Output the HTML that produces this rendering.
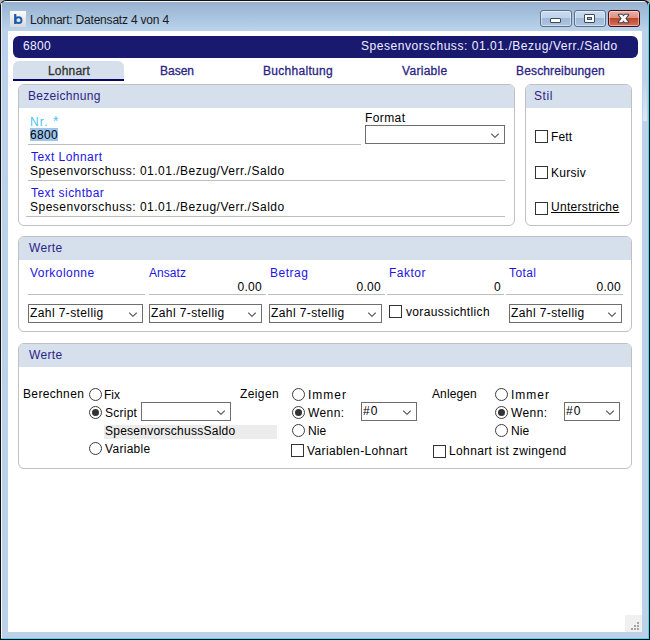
<!DOCTYPE html>
<html><head><meta charset="utf-8">
<style>
html,body{margin:0;padding:0;width:650px;height:640px;overflow:hidden;background:#b4b4b4;}
*{box-sizing:border-box;}
body{font-family:"Liberation Sans",sans-serif;font-size:12px;line-height:14px;position:relative;}
.a{position:absolute;}
.t{position:absolute;white-space:nowrap;line-height:14px;font-size:12px;color:#000;letter-spacing:0.35px;}
#win{position:absolute;left:0;top:0;width:650px;height:640px;background:#111;border-radius:6px 6px 0 0;}
#frame{position:absolute;left:1px;top:1px;width:647px;height:637px;border-radius:5px 5px 0 0;
  background:linear-gradient(#f2f6fa 0,#f2f6fa 1px,#97b2d0 1px,#b9d3eb 29px,#bcd2ea 30px,#bcd2ea 100%);}
#cyanR{position:absolute;left:648px;top:3px;width:1px;height:636px;background:#3fdcf8;}
#cyanB{position:absolute;left:1px;top:638px;width:648px;height:1px;background:#3fdcf8;}
#hlL{position:absolute;left:1px;top:3px;width:1px;height:635px;background:linear-gradient(#dfeaf5,#f6faff);}
#content{position:absolute;left:8px;top:31px;width:634px;height:601px;background:#fff;}
.btn{position:absolute;top:10px;height:17px;width:32px;border:1px solid #5f6f86;border-radius:3px;
  background:linear-gradient(#cbdcef 0,#bed2e9 7px,#a0b9d7 7px,#aec5e0 100%);box-shadow:inset 0 0 0 1px rgba(255,255,255,.45);}
.btn.close{border-color:#4a0c1c;background:linear-gradient(#eab0a2 0,#dc9282 7px,#bf4227 7px,#d4735c 100%);}
#navy{position:absolute;left:13px;top:36px;width:625px;height:22px;border-radius:6px;background:#191970;}
.tab{position:absolute;top:61px;height:20px;}
.grp{position:absolute;border:1px solid #c0c0c0;border-radius:6px;overflow:hidden;background:#fff;}
.grp .hd{position:absolute;left:0;top:0;right:0;height:23px;background:#d6dfec;}
.hline{position:absolute;height:1px;background:#bebebe;}
.dd{position:absolute;border:1px solid #6e6e6e;background:#fff;height:19px;}
.dd .chev{position:absolute;right:5px;top:7px;width:8px;height:5px;}
.cb{position:absolute;width:13px;height:13px;border:1px solid #333;background:#fff;}
.rb{position:absolute;width:13px;height:13px;border:1px solid #3c3c3c;border-radius:50%;background:#fff;}
.rb.on::after{content:"";position:absolute;left:2px;top:2px;width:7px;height:7px;border-radius:50%;background:#333;}
.lbl{color:#2414e4;}
.hdt{color:#2b2585;}
</style></head>
<body>
<div id="win">
  <div id="frame"></div>
  <div id="hlL"></div>
  <div id="cyanR"></div>
  <div id="cyanB"></div>
  <!-- icon -->
  <div class="a" style="left:10px;top:11px;width:16px;height:16px;background:linear-gradient(#fbfbfb,#d9d9d9);"></div>
  <svg class="a" style="left:10px;top:11px;" width="16" height="16" viewBox="0 0 16 16"><rect x="4.1" y="3" width="2.2" height="10" fill="#1a5cb2"/><ellipse cx="8.45" cy="9.15" rx="3.05" ry="2.9" fill="none" stroke="#1a5cb2" stroke-width="1.9"/></svg>
  <div class="t" style="letter-spacing:-0.2px;left:30px;top:13px;color:#1a1a1a;">Lohnart: Datensatz 4 von 4</div>
  <!-- buttons -->
  <div class="btn" style="left:540px;"></div>
  <div class="btn" style="left:574px;"></div>
  <div class="btn close" style="left:608px;"></div>
  <div class="a" style="left:550px;top:18px;width:11px;height:5px;background:#fff;border:1px solid #3d4a5c;border-radius:1px;"></div>
  <div class="a" style="left:584px;top:14px;width:11px;height:9px;background:#fff;border:1px solid #3d4a5c;border-radius:1px;"></div>
  <div class="a" style="left:587px;top:17px;width:5px;height:3px;background:#9fb8d4;border:1px solid #3d4a5c;"></div>
  <svg class="a" style="left:617px;top:13px;" width="13" height="11" viewBox="0 0 13 11">
    <path d="M1.8 1.8 L5.2 1.8 L6.5 3.6 L7.8 1.8 L11.2 1.8 L8.4 5.5 L11.2 9.2 L7.8 9.2 L6.5 7.4 L5.2 9.2 L1.8 9.2 L4.6 5.5 Z" fill="#f8f8f8" stroke="#3a4250" stroke-width="2" stroke-linejoin="round" style="paint-order:stroke"/>
  </svg>
  <div id="content"></div>
  <div class="a" style="left:643px;top:78px;width:4px;height:43px;background:linear-gradient(rgba(255,255,255,0),rgba(255,255,255,.5));"></div>

  <!-- navy bar -->
  <div id="navy"></div>
  <div class="t" style="left:23px;top:39px;color:#f0f0ff;letter-spacing:0.3px;">6800</div>
  <div class="t" style="left:361px;top:39px;color:#f0f0ff;letter-spacing:0.55px;">Spesenvorschuss: 01.01./Bezug/Verr./Saldo</div>

  <!-- tabs -->
  <div class="tab" style="left:13px;width:111px;background:#d6dfec;border-radius:6px 6px 0 0;"></div>
  <div class="a" style="left:13px;top:79px;width:111px;height:2px;background:#05056a;"></div>
  <div class="t" style="letter-spacing:0.2px;left:48px;top:64px;color:#333;-webkit-text-stroke:0.3px #333;">Lohnart</div>
  <div class="t" style="letter-spacing:0px;left:160px;top:64px;color:#2b2585;-webkit-text-stroke:0.3px #2b2585;">Basen</div>
  <div class="t" style="letter-spacing:0.3px;left:263px;top:64px;color:#2b2585;-webkit-text-stroke:0.3px #2b2585;">Buchhaltung</div>
  <div class="t" style="letter-spacing:0.3px;left:402px;top:64px;color:#2b2585;-webkit-text-stroke:0.3px #2b2585;">Variable</div>
  <div class="t" style="letter-spacing:0.15px;left:516px;top:64px;color:#2b2585;-webkit-text-stroke:0.3px #2b2585;">Beschreibungen</div>

  <!-- Bezeichnung group -->
  <div class="grp" style="left:18px;top:84px;width:497px;height:142px;"><div class="hd"></div></div>
  <div class="t hdt" style="letter-spacing:0.3px;left:28px;top:89px;">Bezeichnung</div>
  <div class="t" style="letter-spacing:1.1px;left:30px;top:114px;color:#48c4f8;">Nr. <span style="font-size:14px;letter-spacing:0">*</span></div>
  <div class="a" style="left:30px;top:128px;width:28px;height:13px;background:#9dc5ec;"></div>
  <div class="t" style="left:30px;top:128px;letter-spacing:0.3px;">6800</div>
  <div class="hline" style="left:28px;top:144px;width:333px;"></div>
  <div class="t" style="letter-spacing:0.4px;left:365px;top:111px;">Format</div>
  <div class="dd" style="left:365px;top:125px;width:140px;"><svg class="chev" viewBox="0 0 8 5"><path d="M0.2 0.7 L3.95 4.3 L7.7 0.7" fill="none" stroke="#555" stroke-width="1.15"/></svg></div>
  <div class="t lbl" style="letter-spacing:0.45px;left:31px;top:150px;">Text Lohnart</div>
  <div class="t" style="left:30px;top:164px;letter-spacing:0.5px;">Spesenvorschuss: 01.01./Bezug/Verr./Saldo</div>
  <div class="hline" style="left:28px;top:180px;width:477px;"></div>
  <div class="t lbl" style="letter-spacing:0.45px;left:31px;top:186px;">Text sichtbar</div>
  <div class="t" style="left:30px;top:200px;letter-spacing:0.5px;">Spesenvorschuss: 01.01./Bezug/Verr./Saldo</div>
  <div class="hline" style="left:26px;top:216px;width:479px;"></div>

  <!-- Stil group -->
  <div class="grp" style="left:525px;top:84px;width:107px;height:142px;"><div class="hd"></div></div>
  <div class="t hdt" style="letter-spacing:0.6px;left:534px;top:89px;">Stil</div>
  <div class="cb" style="left:535px;top:130px;"></div>
  <div class="t" style="letter-spacing:0.1px;left:551px;top:130px;">Fett</div>
  <div class="cb" style="left:535px;top:166px;"></div>
  <div class="t" style="letter-spacing:0.3px;left:551px;top:166px;">Kursiv</div>
  <div class="cb" style="left:535px;top:202px;"></div>
  <div class="t" style="letter-spacing:0.3px;left:551px;top:200px;text-decoration:underline;text-decoration-thickness:1px;text-underline-offset:1px;">Unterstriche</div>

  <!-- Werte 1 -->
  <div class="grp" style="left:18px;top:236px;width:614px;height:96px;"><div class="hd"></div></div>
  <div class="t hdt" style="letter-spacing:0.35px;left:29px;top:241px;">Werte</div>
  <div class="t lbl" style="letter-spacing:0.45px;left:30px;top:266px;">Vorkolonne</div>
  <div class="t lbl" style="letter-spacing:0.05px;left:149px;top:266px;">Ansatz</div>
  <div class="t lbl" style="letter-spacing:0.5px;left:270px;top:266px;">Betrag</div>
  <div class="t lbl" style="letter-spacing:0.5px;left:389px;top:266px;">Faktor</div>
  <div class="t lbl" style="letter-spacing:0.4px;left:509px;top:266px;">Total</div>
  <div class="t" style="left:201px;top:280px;width:61px;text-align:right;letter-spacing:0.3px;">0.00</div>
  <div class="t" style="left:320px;top:280px;width:61px;text-align:right;letter-spacing:0.3px;">0.00</div>
  <div class="t" style="left:440px;top:280px;width:61px;text-align:right;">0</div>
  <div class="t" style="left:560px;top:280px;width:61px;text-align:right;letter-spacing:0.3px;">0.00</div>
  <div class="hline" style="left:28px;top:294px;width:117px;"></div>
  <div class="hline" style="left:149px;top:294px;width:117px;"></div>
  <div class="hline" style="left:268px;top:294px;width:117px;"></div>
  <div class="hline" style="left:387px;top:294px;width:117px;"></div>
  <div class="hline" style="left:506px;top:294px;width:117px;"></div>
  <div class="dd" style="left:28px;top:304px;width:115px;"><svg class="chev" viewBox="0 0 8 5"><path d="M0.2 0.7 L3.95 4.3 L7.7 0.7" fill="none" stroke="#555" stroke-width="1.15"/></svg></div>
  <div class="t" style="letter-spacing:0.4px;left:30px;top:306px;">Zahl 7-stellig</div>
  <div class="dd" style="left:149px;top:304px;width:113px;"><svg class="chev" viewBox="0 0 8 5"><path d="M0.2 0.7 L3.95 4.3 L7.7 0.7" fill="none" stroke="#555" stroke-width="1.15"/></svg></div>
  <div class="t" style="letter-spacing:0.4px;left:151px;top:306px;">Zahl 7-stellig</div>
  <div class="dd" style="left:269px;top:304px;width:113px;"><svg class="chev" viewBox="0 0 8 5"><path d="M0.2 0.7 L3.95 4.3 L7.7 0.7" fill="none" stroke="#555" stroke-width="1.15"/></svg></div>
  <div class="t" style="letter-spacing:0.4px;left:271px;top:306px;">Zahl 7-stellig</div>
  <div class="cb" style="left:389px;top:305px;"></div>
  <div class="t" style="letter-spacing:0.35px;left:406px;top:305px;">voraussichtlich</div>
  <div class="dd" style="left:509px;top:304px;width:113px;"><svg class="chev" viewBox="0 0 8 5"><path d="M0.2 0.7 L3.95 4.3 L7.7 0.7" fill="none" stroke="#555" stroke-width="1.15"/></svg></div>
  <div class="t" style="letter-spacing:0.4px;left:511px;top:306px;">Zahl 7-stellig</div>

  <!-- Werte 2 -->
  <div class="grp" style="left:18px;top:343px;width:614px;height:126px;"><div class="hd"></div></div>
  <div class="t hdt" style="letter-spacing:0.35px;left:29px;top:348px;">Werte</div>
  <div class="t" style="letter-spacing:0.35px;left:23px;top:387px;">Berechnen</div>
  <div class="rb" style="left:89px;top:388px;"></div>
  <div class="t" style="letter-spacing:0.0px;left:104px;top:388px;">Fix</div>
  <div class="rb on" style="left:89px;top:406px;"></div>
  <div class="t" style="letter-spacing:0.25px;left:105px;top:406px;">Script</div>
  <div class="dd" style="left:141px;top:402px;width:90px;"><svg class="chev" viewBox="0 0 8 5"><path d="M0.2 0.7 L3.95 4.3 L7.7 0.7" fill="none" stroke="#555" stroke-width="1.15"/></svg></div>
  <div class="a" style="left:104px;top:425px;width:173px;height:14px;background:#ececec;"></div>
  <div class="t" style="letter-spacing:0.25px;left:105px;top:424px;">SpesenvorschussSaldo</div>
  <div class="rb" style="left:89px;top:442px;"></div>
  <div class="t" style="letter-spacing:0.3px;left:105px;top:442px;">Variable</div>

  <div class="t" style="letter-spacing:0.4px;left:240px;top:387px;">Zeigen</div>
  <div class="rb" style="left:292px;top:388px;"></div>
  <div class="t" style="letter-spacing:1.0px;left:308px;top:388px;">Immer</div>
  <div class="rb on" style="left:292px;top:406px;"></div>
  <div class="t" style="letter-spacing:0.4px;left:308px;top:406px;">Wenn:</div>
  <div class="rb" style="left:292px;top:424px;"></div>
  <div class="t" style="letter-spacing:0.1px;left:308px;top:424px;">Nie</div>
  <div class="dd" style="left:361px;top:402px;width:56px;"><svg class="chev" viewBox="0 0 8 5"><path d="M0.2 0.7 L3.95 4.3 L7.7 0.7" fill="none" stroke="#555" stroke-width="1.15"/></svg></div>
  <div class="t" style="letter-spacing:1.2px;left:363px;top:404px;">#0</div>
  <div class="cb" style="left:291px;top:444px;"></div>
  <div class="t" style="letter-spacing:0.37px;left:307px;top:444px;">Variablen-Lohnart</div>

  <div class="t" style="letter-spacing:0.1px;left:432px;top:387px;">Anlegen</div>
  <div class="rb" style="left:495px;top:388px;"></div>
  <div class="t" style="letter-spacing:1.0px;left:511px;top:388px;">Immer</div>
  <div class="rb on" style="left:495px;top:406px;"></div>
  <div class="t" style="letter-spacing:0.4px;left:511px;top:406px;">Wenn:</div>
  <div class="rb" style="left:495px;top:424px;"></div>
  <div class="t" style="letter-spacing:0.1px;left:511px;top:424px;">Nie</div>
  <div class="dd" style="left:564px;top:402px;width:56px;"><svg class="chev" viewBox="0 0 8 5"><path d="M0.2 0.7 L3.95 4.3 L7.7 0.7" fill="none" stroke="#555" stroke-width="1.15"/></svg></div>
  <div class="t" style="letter-spacing:1.2px;left:566px;top:404px;">#0</div>
  <div class="cb" style="left:433px;top:445px;"></div>
  <div class="t" style="letter-spacing:0.37px;left:449px;top:444px;">Lohnart ist zwingend</div>

  <!-- size grip -->
  <div class="a" style="left:625px;top:615px;width:17px;height:17px;background:#f0f0f0;"></div>
  <div class="a" style="left:637px;top:622px;width:2px;height:2px;background:#a4a4a4;"></div>
  <div class="a" style="left:634px;top:625px;width:2px;height:2px;background:#a4a4a4;"></div>
  <div class="a" style="left:637px;top:625px;width:2px;height:2px;background:#a4a4a4;"></div>
  <div class="a" style="left:631px;top:628px;width:2px;height:2px;background:#a4a4a4;"></div>
  <div class="a" style="left:634px;top:628px;width:2px;height:2px;background:#a4a4a4;"></div>
  <div class="a" style="left:637px;top:628px;width:2px;height:2px;background:#a4a4a4;"></div>
</div>
</body></html>
